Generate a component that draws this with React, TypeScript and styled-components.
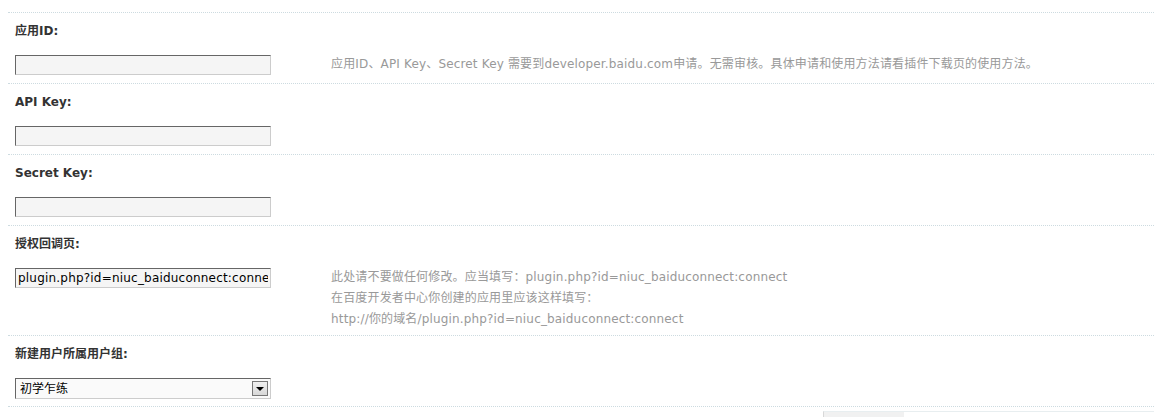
import React from 'react';
import styled, { createGlobalStyle } from 'styled-components';

const GlobalStyle = createGlobalStyle`
  html, body {
    margin: 0;
    padding: 0;
    background: #fff;
  }
  body {
    font: 12px/18px "DejaVu Sans", Verdana, "Noto Sans CJK SC", sans-serif;
    color: #333;
  }
`;

interface Setting {
    label: string;
    value?: string;
    tips?: string[];
    options?: string;
}

const settings: Setting[] = [
    {
        label: '应用ID:',
        value: '',
        tips: ['应用ID、API Key、Secret Key 需要到developer.baidu.com申请。无需审核。具体申请和使用方法请看插件下载页的使用方法。'],
    },
    { label: 'API Key:', value: '' },
    { label: 'Secret Key:', value: '' },
    {
        label: '授权回调页:',
        value: 'plugin.php?id=niuc_baiduconnect:connect',
        tips: [
            '此处请不要做任何修改。应当填写：plugin.php?id=niuc_baiduconnect:connect',
            '在百度开发者中心你创建的应用里应该这样填写：',
            'http://你的域名/plugin.php?id=niuc_baiduconnect:connect',
        ],
    },
    { label: '新建用户所属用户组:', options: '初学乍练' },
];

const Page = styled.div`
  padding: 12px 0 0 8px;
`;

const Block = styled.div`
  border-top: 1px dotted #cddbe0;
  padding: 9px 0 5px 7px;
`;

const Label = styled.div`
  font-weight: 700;
  color: #333;
  line-height: 18px;
  margin-bottom: 15px;
`;

const FieldRow = styled.div`
  display: grid;
  grid-template-columns: 256px 1fr;
  column-gap: 60px;
  align-items: start;
`;

const TextInput = styled.input`
  box-sizing: border-box;
  width: 256px;
  height: 20px;
  margin: 0 0 3px;
  padding: 0 2px;
  border: 1px solid;
  border-color: #666 #ccc #ccc #666;
  background: #f5f5f5;
  font: 12px "DejaVu Sans", Verdana, sans-serif;
  letter-spacing: 0.2px;
  color: #000;
  outline: none;
`;

const Tips = styled.div`
  margin-top: -1px;
  color: #999;
  line-height: 21px;
  letter-spacing: 0.16px;
  white-space: nowrap;
`;

const SelectBox = styled.div`
  box-sizing: border-box;
  width: 256px;
  height: 21px;
  margin-bottom: 2px;
  display: flex;
  align-items: center;
  justify-content: space-between;
  padding: 0 2px 0 4px;
  border: 1px solid;
  border-color: #666 #ccc #ccc #666;
  background: #fafafa;
  color: #000;
`;

const SelectArrow = styled.span`
  box-sizing: border-box;
  width: 16px;
  height: 15px;
  display: flex;
  align-items: center;
  justify-content: center;
  border: 1px solid #777;
  background: linear-gradient(#f0f0f0, #d8d8d8);
  &::after {
    content: '';
    border-left: 4px solid transparent;
    border-right: 4px solid transparent;
    border-top: 4px solid #000;
  }
`;

const Footer = styled.div`
  border-top: 1px dotted #cddbe0;
  padding: 4px 0 0 815px;
`;

const FooterBar = styled.div`
  height: 8px;
  border-top: 1px solid #e8eef0;
  border-left: 1px solid #d8d8d8;
`;

const FooterTab = styled.div`
  width: 80px;
  height: 8px;
  background: #f1f1f1;
`;

const App: React.FC = () => {
    return (
        <Page>
            <GlobalStyle />
            {settings.map((s, i) => (
                <Block key={i}>
                    <Label>{s.label}</Label>
                    <FieldRow>
                        {s.options ? (
                            <SelectBox>
                                <span>{s.options}</span>
                                <SelectArrow />
                            </SelectBox>
                        ) : (
                            <TextInput defaultValue={s.value} />
                        )}
                        {s.tips && (
                            <Tips>
                                {s.tips.map((t, j) => (
                                    <div key={j}>{t}</div>
                                ))}
                            </Tips>
                        )}
                    </FieldRow>
                </Block>
            ))}
            <Footer>
                <FooterBar>
                    <FooterTab />
                </FooterBar>
            </Footer>
        </Page>
    );
};

export default App;
